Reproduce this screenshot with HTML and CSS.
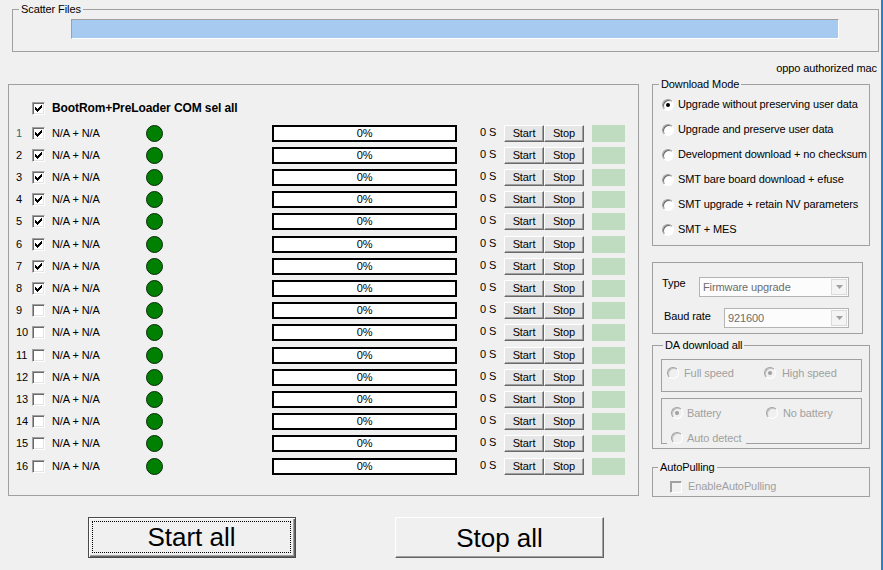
FILE: index.html
```html
<!DOCTYPE html>
<html lang="en">
<head>
<meta charset="utf-8">
<title>Download Tool</title>
<link rel="stylesheet" href="styles.css">
</head>
<body>
<div class="app">
  <fieldset class="gb scatter">
    <legend>Scatter Files</legend>
    <div class="pathbar"></div>
  </fieldset>
  <div class="owner">oppo authorized mac</div>

  <div class="mid">
    <div class="main">
      <div class="hdr">
        <span class="cb"><svg viewBox="1 1 11 11"><path d="M3 5h1v3h-1zM4 6h1v3h-1zM5 7h1v3h-1zM6 6h1v3h-1zM7 5h1v3h-1zM8 4h1v3h-1zM9 3h1v3h-1z"/></svg></span>
        <span class="hlbl">BootRom+PreLoader COM sel all</span>
      </div>
      <div class="rows">
        <div class="row"><span class="num first">1</span><span class="cb"><svg viewBox="1 1 11 11"><path d="M3 5h1v3h-1zM4 6h1v3h-1zM5 7h1v3h-1zM6 6h1v3h-1zM7 5h1v3h-1zM8 4h1v3h-1zM9 3h1v3h-1z"/></svg></span><span class="port">N/A + N/A</span><span class="led"></span><span class="prog">0%</span><span class="time">0 S</span><span class="btn">Start</span><span class="btn">Stop</span><span class="stat"></span></div>
        <div class="row"><span class="num">2</span><span class="cb"><svg viewBox="1 1 11 11"><path d="M3 5h1v3h-1zM4 6h1v3h-1zM5 7h1v3h-1zM6 6h1v3h-1zM7 5h1v3h-1zM8 4h1v3h-1zM9 3h1v3h-1z"/></svg></span><span class="port">N/A + N/A</span><span class="led"></span><span class="prog">0%</span><span class="time">0 S</span><span class="btn">Start</span><span class="btn">Stop</span><span class="stat"></span></div>
        <div class="row"><span class="num">3</span><span class="cb"><svg viewBox="1 1 11 11"><path d="M3 5h1v3h-1zM4 6h1v3h-1zM5 7h1v3h-1zM6 6h1v3h-1zM7 5h1v3h-1zM8 4h1v3h-1zM9 3h1v3h-1z"/></svg></span><span class="port">N/A + N/A</span><span class="led"></span><span class="prog">0%</span><span class="time">0 S</span><span class="btn">Start</span><span class="btn">Stop</span><span class="stat"></span></div>
        <div class="row"><span class="num">4</span><span class="cb"><svg viewBox="1 1 11 11"><path d="M3 5h1v3h-1zM4 6h1v3h-1zM5 7h1v3h-1zM6 6h1v3h-1zM7 5h1v3h-1zM8 4h1v3h-1zM9 3h1v3h-1z"/></svg></span><span class="port">N/A + N/A</span><span class="led"></span><span class="prog">0%</span><span class="time">0 S</span><span class="btn">Start</span><span class="btn">Stop</span><span class="stat"></span></div>
        <div class="row"><span class="num">5</span><span class="cb"><svg viewBox="1 1 11 11"><path d="M3 5h1v3h-1zM4 6h1v3h-1zM5 7h1v3h-1zM6 6h1v3h-1zM7 5h1v3h-1zM8 4h1v3h-1zM9 3h1v3h-1z"/></svg></span><span class="port">N/A + N/A</span><span class="led"></span><span class="prog">0%</span><span class="time">0 S</span><span class="btn">Start</span><span class="btn">Stop</span><span class="stat"></span></div>
        <div class="row"><span class="num">6</span><span class="cb"><svg viewBox="1 1 11 11"><path d="M3 5h1v3h-1zM4 6h1v3h-1zM5 7h1v3h-1zM6 6h1v3h-1zM7 5h1v3h-1zM8 4h1v3h-1zM9 3h1v3h-1z"/></svg></span><span class="port">N/A + N/A</span><span class="led"></span><span class="prog">0%</span><span class="time">0 S</span><span class="btn">Start</span><span class="btn">Stop</span><span class="stat"></span></div>
        <div class="row"><span class="num">7</span><span class="cb"><svg viewBox="1 1 11 11"><path d="M3 5h1v3h-1zM4 6h1v3h-1zM5 7h1v3h-1zM6 6h1v3h-1zM7 5h1v3h-1zM8 4h1v3h-1zM9 3h1v3h-1z"/></svg></span><span class="port">N/A + N/A</span><span class="led"></span><span class="prog">0%</span><span class="time">0 S</span><span class="btn">Start</span><span class="btn">Stop</span><span class="stat"></span></div>
        <div class="row"><span class="num">8</span><span class="cb"><svg viewBox="1 1 11 11"><path d="M3 5h1v3h-1zM4 6h1v3h-1zM5 7h1v3h-1zM6 6h1v3h-1zM7 5h1v3h-1zM8 4h1v3h-1zM9 3h1v3h-1z"/></svg></span><span class="port">N/A + N/A</span><span class="led"></span><span class="prog">0%</span><span class="time">0 S</span><span class="btn">Start</span><span class="btn">Stop</span><span class="stat"></span></div>
        <div class="row"><span class="num">9</span><span class="cb"></span><span class="port">N/A + N/A</span><span class="led"></span><span class="prog">0%</span><span class="time">0 S</span><span class="btn">Start</span><span class="btn">Stop</span><span class="stat"></span></div>
        <div class="row"><span class="num">10</span><span class="cb"></span><span class="port">N/A + N/A</span><span class="led"></span><span class="prog">0%</span><span class="time">0 S</span><span class="btn">Start</span><span class="btn">Stop</span><span class="stat"></span></div>
        <div class="row"><span class="num">11</span><span class="cb"></span><span class="port">N/A + N/A</span><span class="led"></span><span class="prog">0%</span><span class="time">0 S</span><span class="btn">Start</span><span class="btn">Stop</span><span class="stat"></span></div>
        <div class="row"><span class="num">12</span><span class="cb"></span><span class="port">N/A + N/A</span><span class="led"></span><span class="prog">0%</span><span class="time">0 S</span><span class="btn">Start</span><span class="btn">Stop</span><span class="stat"></span></div>
        <div class="row"><span class="num">13</span><span class="cb"></span><span class="port">N/A + N/A</span><span class="led"></span><span class="prog">0%</span><span class="time">0 S</span><span class="btn">Start</span><span class="btn">Stop</span><span class="stat"></span></div>
        <div class="row"><span class="num">14</span><span class="cb"></span><span class="port">N/A + N/A</span><span class="led"></span><span class="prog">0%</span><span class="time">0 S</span><span class="btn">Start</span><span class="btn">Stop</span><span class="stat"></span></div>
        <div class="row"><span class="num">15</span><span class="cb"></span><span class="port">N/A + N/A</span><span class="led"></span><span class="prog">0%</span><span class="time">0 S</span><span class="btn">Start</span><span class="btn">Stop</span><span class="stat"></span></div>
        <div class="row"><span class="num">16</span><span class="cb"></span><span class="port">N/A + N/A</span><span class="led"></span><span class="prog">0%</span><span class="time">0 S</span><span class="btn">Start</span><span class="btn">Stop</span><span class="stat"></span></div>
      </div>
    </div>

    <div class="side">
      <fieldset class="gb dm">
        <legend>Download Mode</legend>
        <div class="opt"><span class="radio sel"></span><span class="otxt">Upgrade without preserving user data</span></div>
        <div class="opt"><span class="radio"></span><span class="otxt">Upgrade and preserve user data</span></div>
        <div class="opt"><span class="radio"></span><span class="otxt">Development download + no checksum</span></div>
        <div class="opt"><span class="radio"></span><span class="otxt">SMT bare board download + efuse</span></div>
        <div class="opt"><span class="radio"></span><span class="otxt">SMT upgrade + retain NV parameters</span></div>
        <div class="opt"><span class="radio"></span><span class="otxt">SMT + MES</span></div>
      </fieldset>

      <div class="tb">
        <div class="tr tr1">
          <span class="tlbl w-type">Type</span>
          <span class="combo w-fw"><span class="ctext">Firmware upgrade</span><span class="dd"><svg width="7" height="4" viewBox="0 0 7 4"><path d="M0 0h7L3.5 4z"/></svg></span></span>
        </div>
        <div class="tr tr2">
          <span class="tlbl w-baud">Baud rate</span>
          <span class="combo w-baudc"><span class="ctext">921600</span><span class="dd"><svg width="7" height="4" viewBox="0 0 7 4"><path d="M0 0h7L3.5 4z"/></svg></span></span>
        </div>
      </div>

      <fieldset class="gb da">
        <legend>DA download all</legend>
        <div class="box1">
          <div class="drow">
            <span class="ditem w1"><span class="radio dis"></span><span class="dtxt t5">Full speed</span></span>
            <span class="ditem"><span class="radio dis sel"></span><span class="dtxt t6">High speed</span></span>
          </div>
        </div>
        <div class="box2">
          <div class="drow">
            <span class="ditem w2"><span class="radio dis sel"></span><span class="dtxt t4">Battery</span></span>
            <span class="ditem"><span class="radio dis"></span><span class="dtxt t5">No battery</span></span>
          </div>
          <div class="drow drow2">
            <span class="ditem ad"><span class="radio dis"></span><span class="dtxt t4">Auto detect</span></span>
          </div>
        </div>
      </fieldset>

      <fieldset class="gb ap">
        <legend>AutoPulling</legend>
        <div class="aprow"><span class="cb dis"></span><span class="dtxt t6">EnableAutoPulling</span></div>
      </fieldset>
    </div>
  </div>

  <div class="bottom">
    <div class="big def"><span class="focus">Start all</span></div>
    <div class="big norm">Stop all</div>
  </div>
</div>
</body>
</html>
```
FILE: styles.css
```css
html, body {
  margin: 0;
  padding: 0;
  background: #f0f0f0;
}
body {
  font-family: "Liberation Sans", Arial, sans-serif;
  font-size: 11px;
  letter-spacing: -0.1px;
  line-height: 13px;
  color: #000;
}
.app {
  width: 881px;
  height: 570px;
  border-right: 2px solid #1883d7;
  overflow: hidden;
}

/* group boxes */
.gb {
  margin: 0;
  padding: 0;
  border: 1px solid #a0a0a0;
  min-width: 0;
  box-sizing: border-box;
}
.gb legend {
  padding: 0 2px;
  height: 13px;
  line-height: 13px;
}

/* scatter */
.scatter {
  margin: 3px 0 0 12px;
  width: 867px;
  padding-bottom: 12px;
}
.scatter legend { margin-left: 6px; }
.pathbar {
  margin: 3px 0 0 58px;
  width: 768px;
  height: 20px;
  box-sizing: border-box;
  background: #a6caf0;
  border: 1px solid;
  border-color: #a0a0a0 #fff #fff #a0a0a0;
}
.owner {
  margin-top: 10px;
  height: 13px;
  text-align: right;
  padding-right: 4px;
}

/* middle */
.mid {
  display: flex;
  align-items: flex-start;
  margin-top: 3px;
}
.main {
  margin: 6px 0 0 8px;
  width: 631px;
  height: 412px;
  box-sizing: border-box;
  border: 1px solid #a0a0a0;
  padding-top: 12px;
}
.hdr {
  display: flex;
  align-items: center;
  height: 22px;
  padding-left: 23px;
}
.hlbl {
  margin-left: 7px;
  font-weight: bold;
  font-size: 12px;
  letter-spacing: -0.1px;
}
.rows { margin-top: 3px; }
.row {
  display: flex;
  align-items: center;
  height: 22px;
  padding-left: 7px;
}
.row:nth-child(5n+1):not(:first-child) { margin-top: 1px; }
.num { width: 16px; }
.num.first { color: #1d6f80; }

.cb {
  display: block;
  flex: none;
  width: 13px;
  height: 13px;
  box-sizing: border-box;
  background: #fff;
  border: 1px solid;
  border-color: #a0a0a0 #fff #fff #a0a0a0;
  box-shadow: inset 1px 1px 0 #696969, inset -1px -1px 0 #e3e3e3;
}
.cb svg {
  display: block;
  width: 11px;
  height: 11px;
  shape-rendering: crispEdges;
}
.cb svg path { fill: #000; }
.cb.dis {
  width: 12px;
  height: 12px;
  background: #f0f0f0;
  box-shadow: inset 1px 1px 0 #a0a0a0;
}

.port { margin-left: 7px; width: 94px; }
.led {
  flex: none;
  width: 17px;
  height: 17px;
  box-sizing: border-box;
  border-radius: 50%;
  background: #008000;
  border: 1px solid #0a2a0a;
}
.prog {
  flex: none;
  margin-left: 109px;
  width: 185px;
  height: 17px;
  box-sizing: border-box;
  border: 2px solid #000;
  background: #fff;
  text-align: center;
  line-height: 13px;
}
.time { margin-left: 23px; width: 24px; margin-top: -2px; }
.btn {
  flex: none;
  width: 40px;
  height: 17px;
  box-sizing: border-box;
  background: #e6e6e6;
  border: 1px solid;
  border-color: #fff #696969 #696969 #fff;
  box-shadow: inset -1px -1px 0 #a0a0a0;
  text-align: center;
  line-height: 14px;
}
.stat {
  flex: none;
  margin-left: 8px;
  width: 33px;
  height: 17px;
  background: #c0dcc0;
}

/* right side */
.side {
  margin-left: 13px;
  width: 218px;
}
.dm {
  width: 218px;
  padding: 1px 0 3px 9px;
}
.dm legend { margin-left: -3px; }
.opt {
  display: flex;
  align-items: center;
  height: 25px;
}
.otxt { margin-left: 4px; white-space: nowrap; }

.radio {
  flex: none;
  display: flex;
  align-items: center;
  justify-content: center;
  width: 12px;
  height: 12px;
  box-sizing: border-box;
  border-radius: 50%;
  background: #fff;
  border: 1px solid;
  border-color: #a0a0a0 #fff #fff #a0a0a0;
  box-shadow: inset 1px 1px 0 #696969;
}
.radio.sel::after {
  content: "";
  width: 4px;
  height: 4px;
  border-radius: 50%;
  background: #000;
}
.radio.dis {
  background: #f0f0f0;
  box-shadow: inset 1px 1px 0 #c4c4c4;
}
.radio.dis.sel::after { background: #a0a0a0; }

.tb {
  margin-top: 16px;
  width: 211px;
  height: 72px;
  box-sizing: border-box;
  border: 1px solid #a0a0a0;
  padding-top: 14px;
}
.tr { display: flex; align-items: flex-start; }
.tr1 { padding-left: 9px; }
.tr2 { padding-left: 11px; margin-top: 11px; }
.tlbl { margin-top: 0; }
.w-type { width: 37px; }
.w-baud { width: 60px; margin-top: 2px; }
.combo {
  display: flex;
  align-items: center;
  justify-content: space-between;
  height: 20px;
  box-sizing: border-box;
  border: 1px solid #b4b4b4;
  background: #fcfcfc;
  color: #6d6d6d;
  padding-left: 3px;
}
.w-fw { width: 150px; }
.w-baudc { width: 125px; }
.dd {
  display: flex;
  align-items: center;
  justify-content: center;
  width: 16px;
  height: 16px;
  margin-right: 1px;
  box-sizing: border-box;
  border: 1px solid #dadada;
  background: #f4f4f4;
}
.dd svg path { fill: #a0a0a0; }

.da {
  margin-top: 5px;
  width: 218px;
  padding: 7px 7px 4px 8px;
}
.da legend { margin-left: 2px; }
.box1 {
  height: 33px;
  box-sizing: border-box;
  border: 1px solid #a0a0a0;
  padding: 3px 0 0 5px;
}
.box2 {
  margin-top: 6px;
  height: 46px;
  box-sizing: border-box;
  border: 1px solid #a0a0a0;
  padding: 4px 0 0 9px;
}
.drow { display: flex; height: 20px; align-items: center; }
.drow2 { margin-top: 5px; }
.ditem { display: flex; align-items: center; }
.w1 { width: 97px; }
.w2 { width: 95px; }
.dtxt { color: #a0a0a0; white-space: nowrap; }
.t4 { margin-left: 4px; }
.t5 { margin-left: 5px; }
.t6 { margin-left: 6px; }
.ad {
  margin-left: -4px;
  padding: 0 4px;
  background: #f0f0f0;
}

.ap {
  margin-top: 12px;
  width: 218px;
  padding: 6px 0 3px 17px;
}
.ap legend { margin-left: -12px; }
.aprow { display: flex; align-items: center; height: 13px; }

/* bottom buttons */
.bottom {
  display: flex;
  margin-top: 20px;
  padding-left: 88px;
  gap: 99px;
}
.big {
  display: flex;
  align-items: stretch;
  justify-content: center;
  height: 41px;
  box-sizing: border-box;
  background: #f0f0f0;
  font-size: 26px;
  line-height: 26px;
  letter-spacing: 0;
}
.big.def {
  width: 208px;
  border: 1px solid #4a4a4a;
  box-shadow: inset 1px 1px 0 #fff, inset -1px -1px 0 #646464, inset -2px -2px 0 #a0a0a0;
  padding: 3px 4px 4px 3px;
}
.focus {
  flex: 1;
  display: flex;
  align-items: center;
  justify-content: center;
  border: 1px dotted #000;
}
.big.norm {
  width: 209px;
  align-items: center;
  border: 1px solid;
  border-color: #fff #646464 #646464 #fff;
  box-shadow: inset -1px -1px 0 #a0a0a0;
}
```
